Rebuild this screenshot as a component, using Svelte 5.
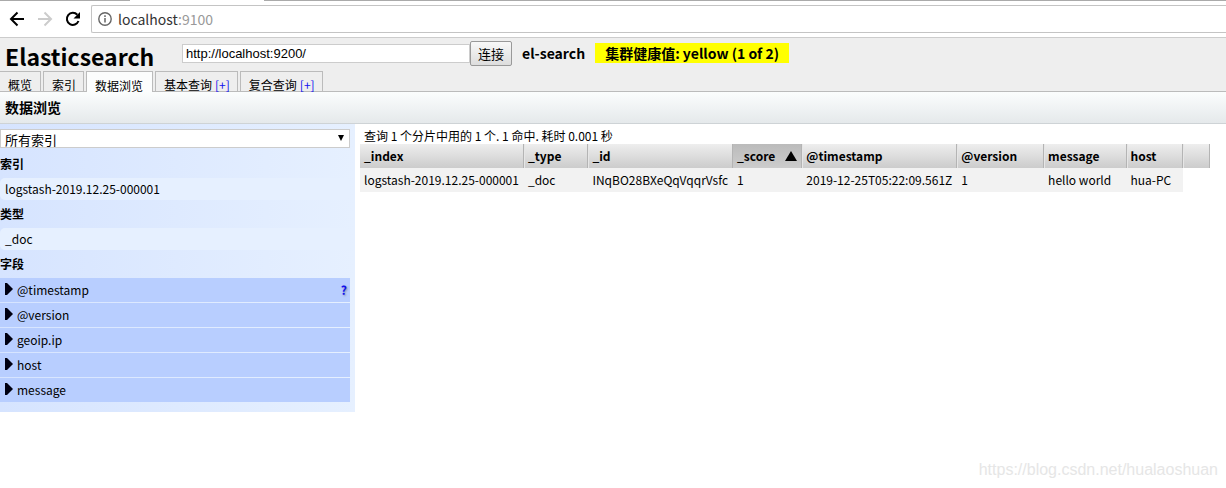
<script>
    let address = 'localhost'
    let port = ':9100'
    let baseUri = 'http://localhost:9200/'
    let index = 'all'

    const tabs = [
        { name: '概览' },
        { name: '索引' },
        { name: '数据浏览', active: true },
        { name: '基本查询', add: true },
        { name: '复合查询', add: true }
    ]
    const fields = ['@timestamp', '@version', 'geoip.ip', 'host', 'message']
    const columns = ['_index', '_type', '_id', '_score', '@timestamp', '@version', 'message', 'host']
    const rows = [
        ['logstash-2019.12.25-000001', '_doc', 'INqBO28BXeQqVqqrVsfc', '1', '2019-12-25T05:22:09.561Z', '1', 'hello world', 'hua-PC']
    ]
</script>

<div class="page">
    <div class="strip"><span class="strip-tab"></span></div>
    <div class="toolbar">
        <button class="nav" aria-label="Back">
            <svg width="16" height="16" viewBox="0 0 16 16"><path d="M15 8H2.5M8.5 1.5L2 8l6.500 6.500" fill="none" stroke="#000" stroke-width="2"/></svg>
        </button>
        <button class="nav" aria-label="Forward" disabled>
            <svg width="16" height="16" viewBox="0 0 16 16"><path d="M1 8h12.500M7.500 1.500L14 8l-6.500 6.500" fill="none" stroke="#ccc" stroke-width="2"/></svg>
        </button>
        <button class="nav" aria-label="Reload">
            <svg width="16" height="16" viewBox="0 0 16 16"><path d="M13.500 10A6 6 0 1 1 12.300 3.800" fill="none" stroke="#000" stroke-width="2"/><path d="M15 1v6.500H8.500z" fill="#000"/></svg>
        </button>
        <div class="omnibox">
            <svg width="14" height="14" viewBox="0 0 14 14"><circle cx="7" cy="7" r="6.200" fill="none" stroke="#666" stroke-width="1.400"/><path d="M7 6v4.500M7 3.300v1.600" stroke="#666" stroke-width="1.500"/></svg>
            <span>{address}<span class="port">{port}</span></span>
        </div>
    </div>

    <header>
        <div class="top">
            <h1>Elasticsearch</h1>
            <form class="connect" on:submit|preventDefault>
                <input type="text" aria-label="URI" bind:value={baseUri}/>
                <button>连接</button>
            </form>
            <span class="cluster">el-search</span>
            <span class="health">集群健康值: yellow (1 of 2)</span>
        </div>
        <nav>
            {#each tabs as tab}
                <div class="tab" class:active={tab.active}>
                    <button>{tab.name}</button>
                    {#if tab.add}<a href="#add">[+]</a>{/if}
                </div>
            {/each}
        </nav>
    </header>

    <h2>数据浏览</h2>

    <main>
        <aside>
            <div class="select">
                <select aria-label="索引" bind:value={index}>
                    <option value="all">所有索引</option>
                </select>
            </div>
            <h3>索引</h3>
            <button class="item">logstash-2019.12.25-000001</button>
            <h3>类型</h3>
            <button class="item">_doc</button>
            <h3>字段</h3>
            {#each fields as field, i}
                <div class="field">
                    <button>
                        <svg width="8" height="12" viewBox="0 0 8 12"><path d="M0 0h2l6 6-6 6H0z" fill="#000011"/></svg>
                        {field}
                    </button>
                    {#if i === 0}<a href="#help">?</a>{/if}
                </div>
            {/each}
        </aside>

        <section>
            <p>查询 1 个分片中用的 1 个. 1 命中. 耗时 0.001 秒</p>
            <table>
                <thead>
                    <tr>
                        {#each columns as column}
                            <th class:sorted={column === '_score'}>
                                <div>
                                    {column}
                                    <svg width="12" height="10" viewBox="0 0 12 10">
                                        {#if column === '_score'}<path d="M6 0l6 10H0z" fill="#000"/>{/if}
                                    </svg>
                                </div>
                            </th>
                        {/each}
                        <td class="filler"></td>
                    </tr>
                </thead>
                <tbody>
                    {#each rows as row}
                        <tr>
                            {#each row as cell}
                                <td>{cell}</td>
                            {/each}
                        </tr>
                    {/each}
                </tbody>
            </table>
        </section>
    </main>

    <footer>https://blog.csdn.net/hualaoshuan</footer>
</div>

<style>
    :global(body) {
        background: #fff;
    }
    .page {
        display: flex;
        flex-direction: column;
        min-height: 100vh;
        font-family: "Noto Sans CJK SC", sans-serif;
        font-size: 12px;
        line-height: 18px;
        color: #000;
    }
    button {
        padding: 0;
        border: 0;
        background: none;
        font: inherit;
        color: inherit;
    }
    a {
        color: #11e;
        text-decoration: none;
    }

    /* browser bar */
    .strip {
        height: 1px;
        padding-left: 130px;
        background: #aaa;
    }
    .strip-tab {
        display: block;
        width: 134px;
        height: 1px;
        background: #fff;
    }
    .toolbar {
        display: flex;
        align-items: center;
        height: 36px;
        padding-left: 9px;
        border-bottom: 1px solid #ccc;
        background: #fff;
    }
    .nav {
        display: flex;
        width: 16px;
        margin-right: 12px;
    }
    .omnibox {
        display: flex;
        flex: 1;
        align-items: center;
        gap: 6px;
        height: 26px;
        margin-left: -2px;
        padding-left: 6px;
        border: 1px solid #c4c4c4;
        border-right: 0;
        border-radius: 2px 0 0 2px;
        font-size: 14px;
        line-height: 24px;
        color: #333;
    }
    .port {
        color: #999;
    }

    /* header */
    header {
        border-bottom: 1px solid #bbb;
        background: #eee;
    }
    .top {
        display: flex;
        align-items: center;
        height: 30px;
        padding: 0 0 3px 5px;
        font-size: 14px;
        font-weight: bold;
    }
    h1 {
        width: 177px;
        margin: 6px 0 0;
        font-size: 23px;
        line-height: 28px;
    }
    .connect {
        display: flex;
        align-items: center;
        align-self: flex-start;
        margin: 3px 10px 0 0;
    }
    .connect input {
        box-sizing: border-box;
        width: 288px;
        height: 19px;
        padding: 0 3px;
        border: 1px solid #ccc;
        font: 13px "Liberation Sans", sans-serif;
    }
    .connect button {
        box-sizing: border-box;
        width: 42px;
        height: 25px;
        border: 1px solid #999;
        border-radius: 2px;
        background: linear-gradient(#f8f8f8, #ddd);
        font-size: 13px;
        font-weight: normal;
        line-height: 23px;
    }
    .cluster {
        margin-right: 10px;
    }
    .health {
        padding: 0 10px;
        background: #ff0;
        line-height: 20px;
    }
    nav {
        display: flex;
        gap: 2px;
        height: 20px;
        line-height: 12px;
    }
    .tab {
        box-sizing: border-box;
        display: flex;
        gap: 3px;
        height: 20px;
        padding: 7px 7px 0 8px;
        border: 1px solid #bbb;
        border-bottom: 0;
    }
    .tab:first-child {
        padding-right: 8px;
        border-left: 0;
    }
    .tab.active {
        height: 21px;
        padding-right: 9px;
        background: #fcfdfd;
    }
    h2 {
        margin: 0;
        padding: 0 5px;
        border-bottom: 1px solid #ced3d6;
        background: linear-gradient(#fbfdfd, #e5e9eb);
        font-size: 14px;
        line-height: 31px;
    }

    /* sidebar */
    main {
        display: flex;
        align-items: flex-start;
    }
    aside {
        box-sizing: border-box;
        width: 355px;
        flex-shrink: 0;
        padding: 5px 5px 9px 0;
        background: linear-gradient(to right, #d6e4ff, #e6f0ff);
    }
    .select {
        position: relative;
        margin-bottom: 7px;
    }
    .select::after {
        content: "";
        position: absolute;
        top: 6px;
        right: 6px;
        border: 3px solid transparent;
        border-top: 6px solid #000;
        border-bottom: 0;
        pointer-events: none;
    }
    select {
        box-sizing: border-box;
        display: block;
        width: 100%;
        height: 19px;
        padding: 0 4px;
        border: 1px solid #ccc;
        border-radius: 0;
        appearance: none;
        background: #fff;
        font: 13px/20px "Noto Sans CJK SC", sans-serif;
        color: #000;
    }
    h3 {
        margin: 0 0 5px;
        font-size: 12px;
        line-height: 18px;
    }
    .item {
        display: block;
        width: 100%;
        height: 22px;
        margin-bottom: 5px;
        padding: 0 5px;
        border-radius: 5px;
        background: #e6f0ff;
        text-align: left;
    }
    .field {
        display: flex;
        align-items: center;
        height: 24px;
        margin-bottom: 1px;
        padding: 0 3px 0 5px;
        background: #b8ceff;
    }
    .field button {
        display: flex;
        flex: 1;
        gap: 4px;
        text-align: left;
    }
    .field svg {
        margin-top: 2px;
    }
    .field a {
        font-weight: bold;
        text-shadow: 1px 1px 2px #88a;
    }

    /* results */
    section {
        flex: 1;
        padding: 3px 16px 0 5px;
    }
    p {
        margin: 0;
        padding: 0 4px;
        line-height: 17px;
    }
    table {
        width: 100%;
        border-collapse: separate;
        border-spacing: 0;
    }
    th, td {
        height: 24px;
        padding: 0 4px;
        text-align: left;
        white-space: nowrap;
    }
    th, .filler {
        border-right: 1px solid #b4b4b4;
        background: linear-gradient(#eee, #ccc);
    }
    th + th, .filler {
        box-shadow: inset 1px 0 #e6e6e6;
    }
    th.sorted {
        background: linear-gradient(#bbb, #ccc);
        box-shadow: none;
    }
    th div {
        display: flex;
        align-items: center;
        gap: 10px;
    }
    .filler {
        width: 100%;
    }
    tbody td {
        padding-right: 5px;
        background: #f2f2f2;
    }

    footer {
        margin-top: auto;
        padding: 0 8px 8px;
        font: 16px/20px "Liberation Sans", sans-serif;
        color: #e6e6e6;
        text-align: right;
    }
</style>
